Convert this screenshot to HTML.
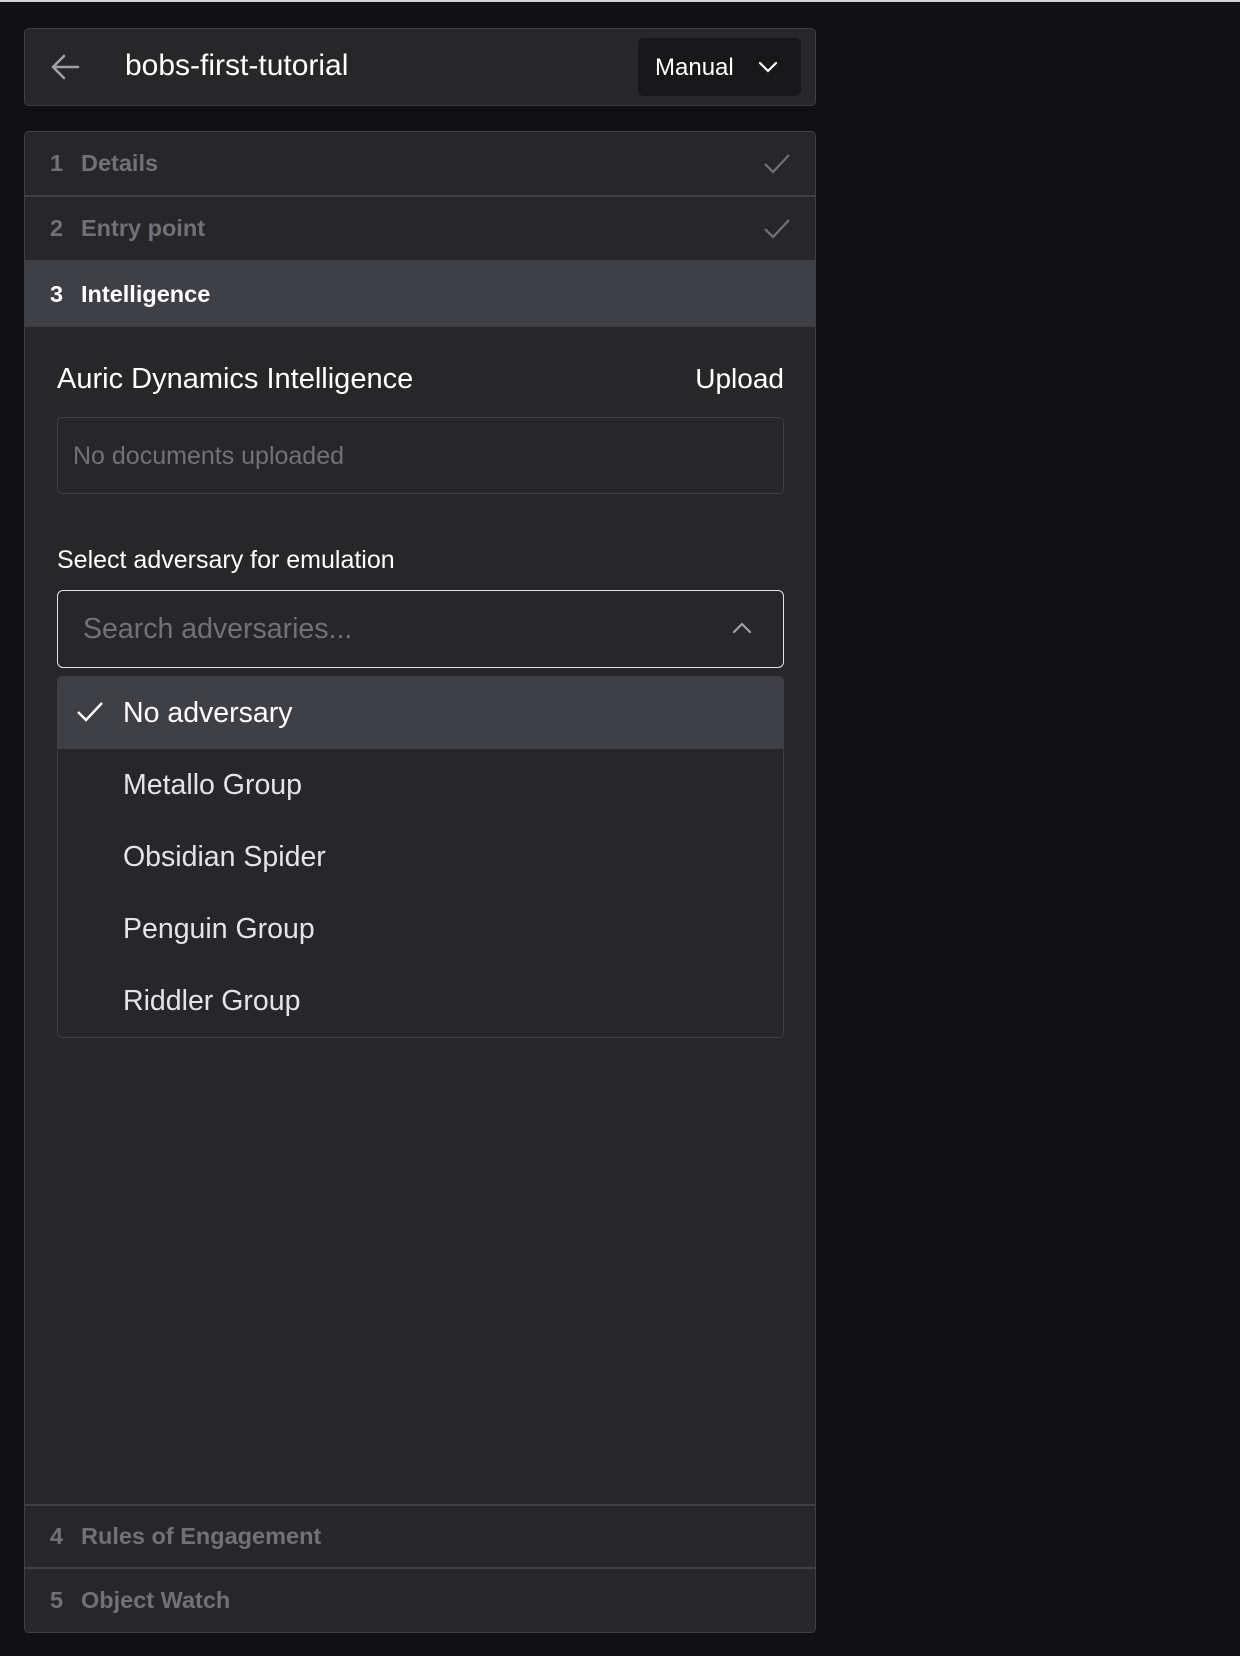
<!DOCTYPE html>
<html><head><style>
*{box-sizing:border-box;margin:0;padding:0}
body{width:1240px;height:1656px;background:#111113;font-family:"Liberation Sans",sans-serif;position:relative;overflow:hidden;border-top:2px solid #d4d4d8}
.abs{position:absolute}
.hdr{left:24px;top:26px;width:792px;height:78px;background:#27272a;border:1.5px solid #3f3f46;border-radius:5px}
.panel{left:24px;top:129px;width:792px;height:1502px;background:#27272a;border:1.5px solid #3f3f46;border-radius:5px;overflow:hidden}
.row{position:absolute;left:0;right:0;height:65px;border-bottom:2px solid #3f3f46;color:#71717a;font-size:23.5px;font-weight:bold;display:flex;align-items:center;padding-left:25px}
.row .n{width:31px}
.chk{position:absolute;right:24px;top:20px}
.item{position:absolute;left:0;right:0;height:72px;display:flex;align-items:center;padding-left:65px;color:#e4e4e7;font-size:28.5px}
</style></head><body>
<div class="abs hdr">
 <svg class="abs" style="left:24px;top:24px" width="32" height="28" viewBox="0 0 32 28"><path d="M29 14H4M15 3L4 14l11 11" fill="none" stroke="#a1a1aa" stroke-width="2.5" stroke-linecap="round" stroke-linejoin="round"/></svg>
 <div class="abs" style="left:100px;top:20px;color:#fff;font-size:30px">bobs-first-tutorial</div>
 <div class="abs" style="left:613px;top:9px;width:163px;height:58px;background:#18181b;border-radius:6px;color:#fff;font-size:24px;padding:16px 0 0 17px">Manual
  <svg class="abs" style="left:120px;top:22px" width="20" height="14" viewBox="0 0 20 14"><path d="M2 3l8 8 8-8" fill="none" stroke="#fff" stroke-width="2.2" stroke-linecap="round"/></svg></div>
</div>
<div class="abs panel">
 <div class="row" style="top:0"><span class="n">1</span>Details<svg class="chk" width="28" height="24" viewBox="0 0 28 24"><path d="M2 12l8 8L26 3" fill="none" stroke="#71717a" stroke-width="2.2"/></svg></div>
 <div class="row" style="top:65px"><span class="n">2</span>Entry point<svg class="chk" width="28" height="24" viewBox="0 0 28 24"><path d="M2 12l8 8L26 3" fill="none" stroke="#71717a" stroke-width="2.2"/></svg></div>
 <div class="row" style="top:130px;background:#3f3f46;color:#fff;border:none"><span class="n">3</span>Intelligence</div>
 <div class="abs" style="left:32px;top:231px;color:#fff;font-size:29px">Auric Dynamics Intelligence</div>
 <div class="abs" style="right:31px;top:231px;color:#fff;font-size:28px">Upload</div>
 <div class="abs" style="left:32px;top:285px;width:727px;height:77px;border:1.5px solid #3f3f46;border-radius:5px;color:#71717a;font-size:25px;padding:24px 0 0 15px">No documents uploaded</div>
 <div class="abs" style="left:32px;top:414px;color:#fff;font-size:25px">Select adversary for emulation</div>
 <div class="abs" style="left:32px;top:458px;width:727px;height:78px;border:1.5px solid #e4e4e7;border-radius:6px;color:#71717a;font-size:28.5px;padding:22px 0 0 25px">Search adversaries...
  <svg class="abs" style="left:673px;top:30px" width="22" height="14" viewBox="0 0 22 14"><path d="M3 11l8-8 8 8" fill="none" stroke="#a1a1aa" stroke-width="2.2" stroke-linecap="round"/></svg></div>
 <div class="abs" style="left:32px;top:544px;width:727px;height:362px;border:1.5px solid #3f3f46;border-radius:5px;overflow:hidden">
  <div class="item" style="top:0;background:#3f3f46;color:#fff"><svg class="abs" style="left:18px;top:24px" width="28" height="22" viewBox="0 0 28 22"><path d="M2 11l8 8L26 2" fill="none" stroke="#fff" stroke-width="2.4"/></svg>No adversary</div>
  <div class="item" style="top:72px">Metallo Group</div>
  <div class="item" style="top:144px">Obsidian Spider</div>
  <div class="item" style="top:216px">Penguin Group</div>
  <div class="item" style="top:288px">Riddler Group</div>
 </div>
 <div class="row" style="top:1372px;border-top:2px solid #3f3f46;height:65px"><span class="n">4</span>Rules of Engagement</div>
 <div class="row" style="top:1436px;border-bottom:none"><span class="n">5</span>Object Watch</div>
</div>
</body></html>
